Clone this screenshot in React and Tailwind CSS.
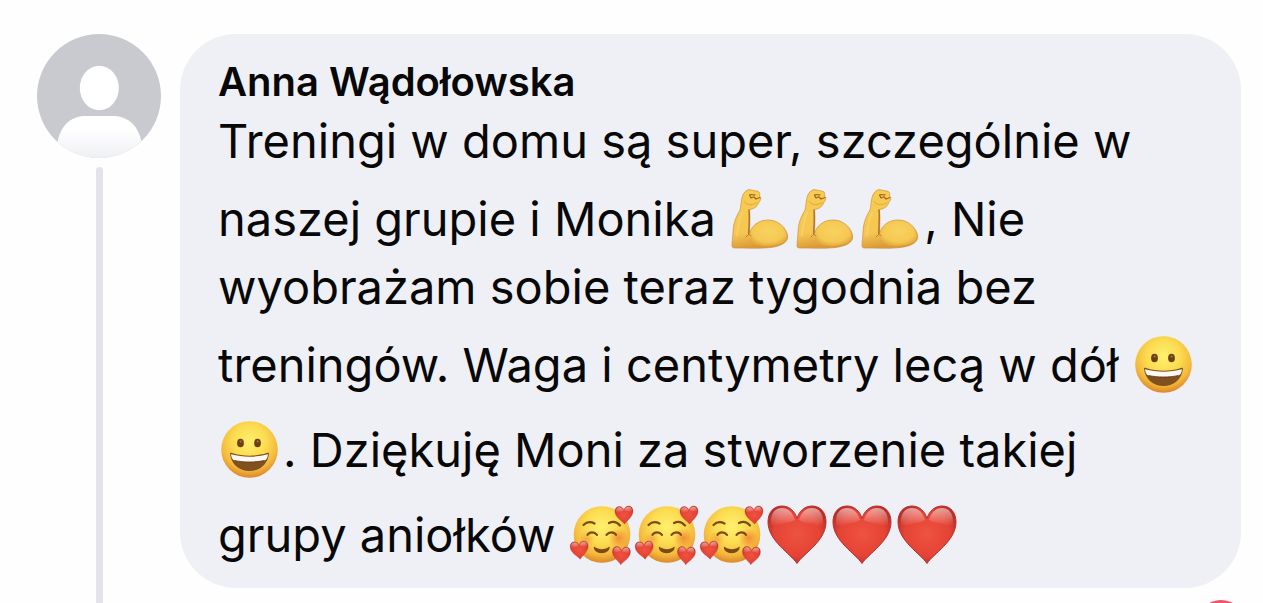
const HEART = "M33 58.5 C27 49 4 36 4 17 C4 7 10 1 18 1 C25 1 31 6 33 13.5 C35 6 41 1 48 1 C56 1 62 7 62 17 C62 36 39 49 33 58.5 Z";

function Defs() {
  return (
    <svg className="absolute h-0 w-0" aria-hidden="true">
      <defs>
        <radialGradient id="face" cx="0.5" cy="0.36" r="0.66">
          <stop offset="0%" stopColor="#fff06e" />
          <stop offset="45%" stopColor="#fbdc50" />
          <stop offset="76%" stopColor="#f4b93c" />
          <stop offset="100%" stopColor="#d97f27" />
        </radialGradient>
        <radialGradient id="blush">
          <stop offset="0%" stopColor="#f0782d" stopOpacity="0.75" />
          <stop offset="100%" stopColor="#f0782d" stopOpacity="0" />
        </radialGradient>
        <linearGradient id="arm" x1="0" y1="0" x2="0.2" y2="1">
          <stop offset="0%" stopColor="#f8cd50" />
          <stop offset="75%" stopColor="#f4c653" />
          <stop offset="100%" stopColor="#dc9a37" />
        </linearGradient>
        <radialGradient id="bicep" cx="0.5" cy="0.4" r="0.62">
          <stop offset="0%" stopColor="#f8d35f" />
          <stop offset="70%" stopColor="#f5c853" />
          <stop offset="100%" stopColor="#e2a83f" />
        </radialGradient>
        <radialGradient id="heart" cx="0.5" cy="0.48" r="0.6">
          <stop offset="0%" stopColor="#ee5340" />
          <stop offset="65%" stopColor="#e54335" />
          <stop offset="100%" stopColor="#b32823" />
        </radialGradient>
        <linearGradient id="shine" x1="0" y1="0" x2="0" y2="1">
          <stop offset="0%" stopColor="#fff" stopOpacity="0.55" />
          <stop offset="85%" stopColor="#fff" stopOpacity="0" />
        </linearGradient>
        <linearGradient id="shirt" x1="0" y1="0" x2="0" y2="1">
          <stop offset="30%" stopColor="#fff" />
          <stop offset="100%" stopColor="#eff0f4" />
        </linearGradient>
        <clipPath id="avatarClip">
          <circle cx="62" cy="62" r="62" />
        </clipPath>
      </defs>
    </svg>
  );
}

function Emoji({ label, children }) {
  return (
    <svg role="img" aria-label={label} viewBox="0 0 65 60" className="inline-block h-[60px] w-[65px] align-[-13px]">
      {children}
    </svg>
  );
}

function Muscle() {
  return (
    <Emoji label="muscle">
      <path
        d="M3 57 C3 51 4 47 4 43 C4.500 33 7 28 11 21 C12 17 12 11 13.500 7 C14.500 4 17 1 20 .6 L29 2.300 C31 3.500 31 5 30.500 7 C32.500 9 32 11 30 13 C29 16.500 26 20 20.500 20.500 C21.500 29 20.500 38 20.500 44 C23 37 29 31 39 31 C50 31 57 39 58.500 46 C60 52 54 56 47 57.500 C38 60 20 59 6 59 C4 59 3 58.500 3 57 Z"
        fill="url(#arm)"
        stroke="#cf9238"
        strokeWidth="0.7"
      />
      <path d="M21.500 45 C25 36 31 32 39 32 C49 32 56 39 57.500 46 C59 52 53 55 46 56 C37 58 28 57 21 53 Z" fill="url(#bicep)" />
      <path d="M20 21 C20.700 29 19.800 38 19.800 45" fill="none" stroke="#a9682c" strokeWidth="1.300" strokeLinecap="round" />
      <path d="M19.500 45.500 L17 48 M19.500 45.500 L22 46.500" fill="none" stroke="#b9792f" strokeWidth="0.9" strokeLinecap="round" />
      <path d="M15 12 C17 16 22 17 28.500 13.500" fill="none" stroke="#e0aa45" strokeWidth="1" />
      <path d="M20.500 6 C22 5 24 6.200 26 5.800 M20.500 6 L22 9 L25 7.800 L27 10 M27 10 L31 8.500" fill="none" stroke="#9a6226" strokeWidth="1.200" strokeLinecap="round" strokeLinejoin="round" />
      <path d="M8 46 C9 36 10 30 13 24" fill="none" stroke="#fbdc70" strokeWidth="2" strokeLinecap="round" opacity="0.5" />
    </Emoji>
  );
}

function Grin() {
  return (
    <Emoji label="grinning face">
      <circle cx="31.5" cy="29.5" r="28.300" fill="url(#face)" />
      <ellipse cx="22.5" cy="23" rx="3.400" ry="4.300" fill="#6d3f17" />
      <ellipse cx="39.5" cy="23" rx="3.400" ry="4.300" fill="#6d3f17" />
      <circle cx="22.7" cy="21.500" r="1.100" fill="#a97438" />
      <circle cx="39.7" cy="21.500" r="1.100" fill="#a97438" />
      <path d="M12 33.500 C12 32.500 13 32.500 14 33 C25 36.500 38 36.500 49 33 C50 32.500 51 32.500 51 33.500 C50 44 42 51 31.500 51 C21 51 13 44 12 33.500 Z" fill="#80501d" />
      <path d="M13 34.200 C25 37.500 38 37.500 50 34.200 C49.500 38 48.500 39.800 46.500 40.500 C37 42.500 26 42.500 16.500 40.500 C14.500 39.800 13.500 38 13 34.200 Z" fill="#fcf9f5" />
      <path d="M16.500 40.500 C26 42.500 37 42.500 46.500 40.500" fill="none" stroke="#5c3412" strokeWidth="0.8" />
    </Emoji>
  );
}

function HeartShape(props) {
  return (
    <g {...props}>
      <path d={HEART} fill="url(#heart)" stroke="#b23330" strokeWidth="1" />
      <path d="M7 17 C7 8 11 3 18 3 C25 3 29 8 31 15 C25 19 12 18 7 24 Z" fill="url(#shine)" />
      <path d="M35 15 C37 8 41 3 48 3 C55 3 59 8 59 17 L59 24 C54 18 41 19 35 15 Z" fill="url(#shine)" />
    </g>
  );
}

function Heart() {
  return (
    <Emoji label="red heart">
      <HeartShape />
    </Emoji>
  );
}

function Loved() {
  return (
    <Emoji label="smiling face with hearts">
      <circle cx="33" cy="29.500" r="28.300" fill="url(#face)" />
      <circle cx="18" cy="34" r="8" fill="url(#blush)" opacity="0.6" />
      <circle cx="49.500" cy="33" r="10" fill="url(#blush)" />
      <g fill="none" stroke="#7a4a18" strokeWidth="2.200" strokeLinecap="round">
        <path d="M14.500 20 C17.500 17 21.500 16.500 25.500 18.500" />
        <path d="M40 18 C44 16 48 17 51 20.500" />
        <path d="M18.500 29.800 C20.500 26.500 25.500 26.500 28 29.800" />
        <path d="M37.500 29.800 C40 26.500 45 26.500 47 29.800" />
      </g>
      <path d="M25 41.500 C30 45 36 45 40.500 41.500 C41.500 45 37 48.200 32.800 48.200 C28 48.200 24 45 25 41.500 Z" fill="#7a4a18" />
      <HeartShape transform="translate(44.500 1.500) rotate(-3) scale(0.31)" />
      <HeartShape transform="translate(-.5 37) rotate(-5) scale(0.31)" />
      <HeartShape transform="translate(42.500 41) rotate(3) scale(0.31)" />
    </Emoji>
  );
}

function Avatar() {
  return (
    <svg role="img" aria-label="Anna Wądołowska" viewBox="0 0 124 124" className="h-[124px] w-[124px] shrink-0">
      <g clipPath="url(#avatarClip)">
        <rect width="124" height="124" fill="#c9cad0" />
        <ellipse cx="62.300" cy="54" rx="19.500" ry="22.300" fill="#fff" />
        <path d="M20 112 C22 92 34 82 48 82 H76 C91 82 103 92 105 112 V124 H20 Z" fill="url(#shirt)" />
      </g>
    </svg>
  );
}

function Line({ emoji, children }) {
  return <span className={`block whitespace-nowrap leading-[61px] ${emoji ? "h-[85px] pt-[17px]" : "h-[61px]"}`}>{children}</span>;
}

export default function App() {
  return (
    <main className="h-screen overflow-hidden bg-[#fefefe] pt-[34px] pr-[22px] pl-[37px] font-['Inter',sans-serif] text-[#080809]">
      <Defs />
      <article className="flex h-full gap-[19px]">
        {/* Avatar + thread line */}
        <div className="flex shrink-0 flex-col items-center gap-[9px]">
          <Avatar />
          <div className="w-[7px] flex-1 rounded-t-full bg-[#e3e3e9]"></div>
        </div>

        {/* Comment */}
        <div className="min-w-0 flex-1">
          <div className="rounded-[56px] bg-[#eff0f5] px-[38px] pt-5 pb-4">
            <h2 className="text-[40px] leading-[56px] font-semibold">Anna Wądołowska</h2>
            <p className="text-[47px]">
              <Line>Treningi w domu są super, szczególnie w</Line>
              <Line emoji>
                naszej grupie i Monika <Muscle /><Muscle /><Muscle />, Nie
              </Line>
              <Line>wyobrażam sobie teraz tygodnia bez</Line>
              <Line emoji>
                treningów. Waga i centymetry lecą w dół <Grin />
              </Line>
              <Line emoji>
                <Grin />. Dziękuję Moni za stworzenie takiej
              </Line>
              <Line emoji>
                grupy aniołków <Loved /><Loved /><Loved /><Heart /><Heart /><Heart />
              </Line>
            </p>
          </div>
          <div className="mt-3 flex justify-end">
            <div className="mr-[-4px] h-12 w-12 rounded-full bg-[#f0566a]"></div>
          </div>
        </div>
      </article>
    </main>
  );
}
